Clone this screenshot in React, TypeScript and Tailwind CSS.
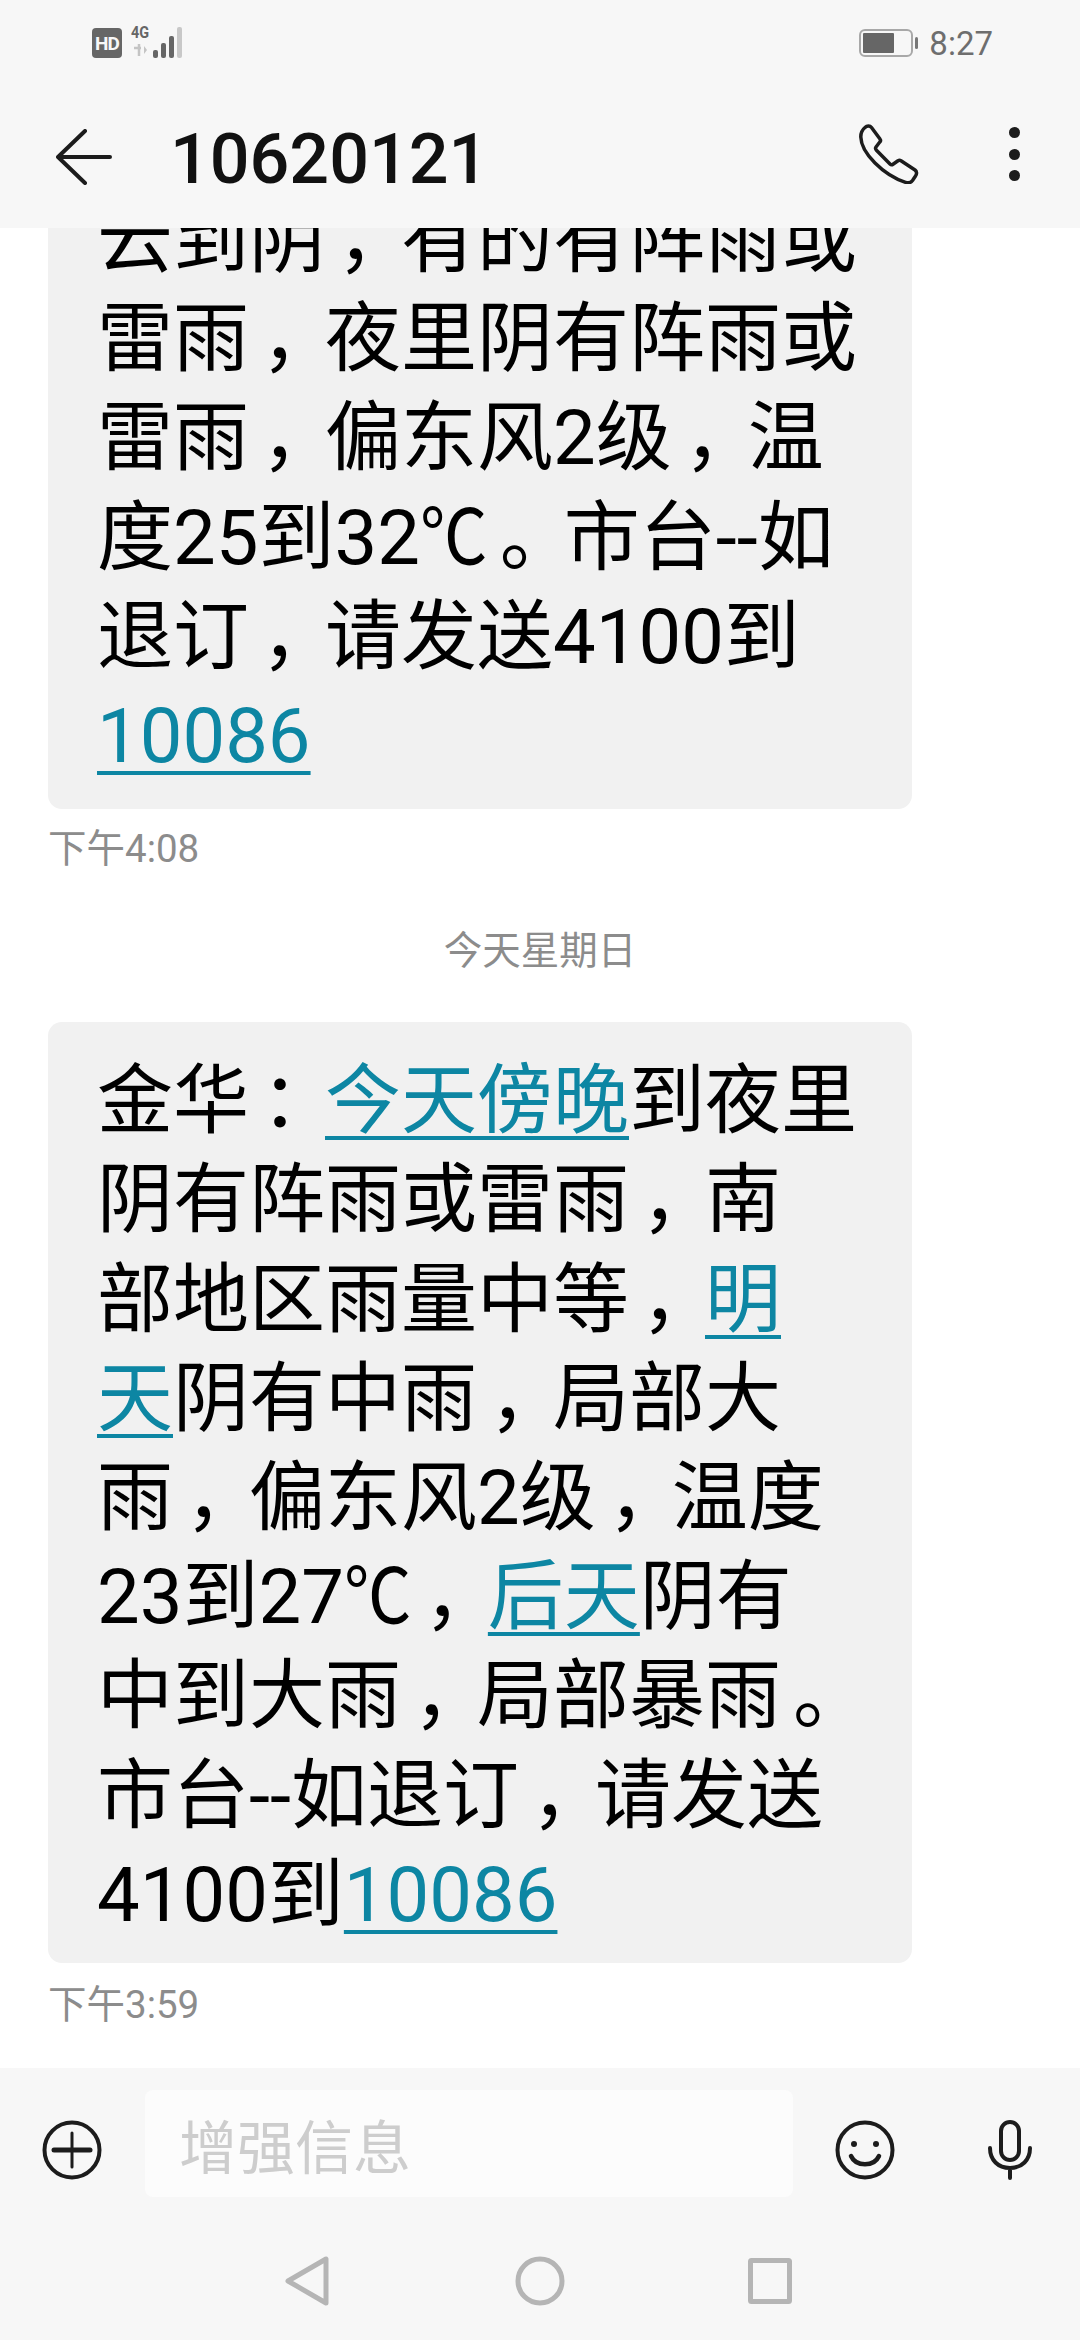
const font = "[font-family:Roboto,'Noto_Sans_CJK_SC',sans-serif]";

type Segment = string | { link: string };

const oldMessage: Segment[][] = [
  ["云到阴，有的有阵雨或"],
  ["雷雨，夜里阴有阵雨或"],
  ["雷雨，偏东风2级，温"],
  ["度25到32℃。市台--如"],
  ["退订，请发送4100到"],
  [{ link: "10086" }],
];

const newMessage: Segment[][] = [
  ["金华：", { link: "今天傍晚" }, "到夜里"],
  ["阴有阵雨或雷雨，南"],
  ["部地区雨量中等，", { link: "明" }],
  [{ link: "天" }, "阴有中雨，局部大"],
  ["雨，偏东风2级，温度"],
  ["23到27℃，", { link: "后天" }, "阴有"],
  ["中到大雨，局部暴雨。"],
  ["市台--如退订，请发送"],
  ["4100到", { link: "10086" }],
];

// punctuation sits nearer the middle of its cell in the original, and the degree sign is narrower
function Run({ text }: { text: string }) {
  return (
    <>
      {text.split(/([，。：℃])/).map((part, i) => {
        if (part === "℃") {
          return (
            <span key={i} className="mr-[-8px] inline-block origin-left scale-x-[0.89]">
              {part}
            </span>
          );
        }
        if (part === "，" || part === "。" || part === "：") {
          return (
            <span key={i} className="ml-[12px] tracking-[-12px]">
              {part}
            </span>
          );
        }
        return <span key={i}>{part}</span>;
      })}
    </>
  );
}

function Bubble({ lines, className }: { lines: Segment[][]; className: string }) {
  return (
    <div className={`w-[864px] rounded-[14px] bg-[#f1f1f1] pl-[49px] text-[76px] leading-[99.2px] text-black whitespace-nowrap ${className}`}>
      {lines.map((line, i) => (
        <div key={i}>
          {line.map((seg, j) =>
            typeof seg === "string" ? (
              <Run key={j} text={seg} />
            ) : (
              <span key={j} className="text-[#0d86a3] underline decoration-[4px] underline-offset-[9px]">
                {seg.link}
              </span>
            )
          )}
        </div>
      ))}
    </div>
  );
}

function SignalBars() {
  return (
    <svg width="62" height="32" viewBox="0 0 62 32" className="ml-[8px]">
      <path d="M4 21h7M9 17v12" stroke="#c4c4c4" strokeWidth="2.5" fill="none" />
      <path d="M14 19l3 4-3 4" fill="#c4c4c4" />
      <rect x="23" y="23" width="5" height="8" rx="2" fill="#666" />
      <rect x="31" y="16" width="5" height="15" rx="2" fill="#666" />
      <rect x="39" y="9" width="5" height="22" rx="2" fill="#666" />
      <rect x="47" y="0" width="5" height="31" rx="2" fill="#c8c8c8" />
    </svg>
  );
}

export default function App() {
  return (
    <div className={`relative flex h-[2340px] w-[1080px] flex-col overflow-hidden bg-white ${font}`}>
      <header className="z-10 h-[228px] shrink-0 bg-[#f7f7f7]">
        <div className="flex h-[86px] items-center justify-between pl-[92px] pr-[87px]">
          <div className="relative flex items-center">
            <div className="flex h-[30px] w-[30px] items-center justify-center rounded-[4px] bg-[#666] text-[19px] font-bold leading-none tracking-[-1px] text-[#f7f7f7]">
              HD
            </div>
            <SignalBars />
            <span className="absolute left-[39px] top-[-3px] origin-left scale-x-[0.85] text-[17px] font-bold leading-none text-[#666]">4G</span>
          </div>
          <div className="flex items-center">
            <svg width="60" height="28" viewBox="0 0 60 28">
              <rect x="1" y="1" width="52" height="26" rx="5" fill="none" stroke="#a8a8a8" strokeWidth="2" />
              <rect x="4" y="4" width="31" height="20" rx="1" fill="#666" />
              <rect x="56" y="8" width="3" height="12" rx="1.5" fill="#777" />
            </svg>
            <span className="ml-[10px] text-[33px] leading-none text-[#6e6e6e]">8:27</span>
          </div>
        </div>
        <div className="flex h-[142px] items-center pl-[56px] pr-[60px]">
          <svg width="56" height="56" viewBox="0 0 56 56" fill="none" stroke="#1c1c1c" strokeWidth="4" strokeLinecap="round" strokeLinejoin="round">
            <path d="M29 2L2 28l27 26M2 28h52" />
          </svg>
          <h1 className="ml-[58px] mt-[4px] flex-1 text-[70px] font-medium leading-none text-[#111]">10620121</h1>
          <svg width="60" height="60" viewBox="0 0 60 60" fill="none" stroke="#1c1c1c" strokeWidth="3.5" strokeLinejoin="round" className="mb-[6px]">
            <path d="M6 3.500C8 1.500 11 1.500 12.500 3.500L21 15c.8 1 .7 2-.2 3l-3.800 5c-.7 1-.6 2 .2 3L31 40c1 1 2 1 3 .3l5-3.500c1-.6 2-.6 3 0L56 46c2 1.500 2 4 .5 6l-3 4.500c-1.500 2-4 2.800-7 1.800C36 55 26 49 16 39 7 30 2 21 1.800 13 1.700 9 3 6 6 3.500z" />
          </svg>
          <div className="mb-[6px] ml-[90px] flex h-[54px] flex-col items-center justify-between">
            <span className="h-[11px] w-[11px] rounded-full bg-[#1c1c1c]" />
            <span className="h-[11px] w-[11px] rounded-full bg-[#1c1c1c]" />
            <span className="h-[11px] w-[11px] rounded-full bg-[#1c1c1c]" />
          </div>
        </div>
      </header>

      <main className="flex min-h-0 flex-1 flex-col justify-end overflow-hidden pb-[39px] pl-[48px]">
        <Bubble lines={oldMessage} className="pb-[23px] pt-[3px]" />
        <div className="mt-[16px] text-[38.500px] leading-[48px] text-[#8c8c8c]">下午4:08</div>
        <div className="mb-[47px] ml-[-48px] mt-[54px] text-center text-[38.500px] leading-[48px] text-[#8c8c8c]">今天星期日</div>
        <Bubble lines={newMessage} className="pb-[18px] pt-[30px]" />
        <div className="mt-[18px] text-[38.500px] leading-[48px] text-[#8c8c8c]">下午3:59</div>
      </main>

      <footer className="h-[272px] shrink-0 bg-[#f7f7f7]">
        <div className="flex h-[150px] items-start pl-[42px] pt-[22px]">
          <svg width="60" height="60" viewBox="0 0 60 60" fill="none" stroke="#1c1c1c" strokeWidth="4" strokeLinecap="round" className="mt-[30px]">
            <circle cx="30" cy="30" r="27.500" />
            <path d="M12 30h36" strokeWidth="5" />
            <path d="M30 13v34" strokeWidth="3" />
          </svg>
          <div className="ml-[43px] flex h-[107px] w-[648px] items-center rounded-[8px] bg-[#fcfcfc] pl-[34px] pt-[10px] text-[58px] leading-none text-[#cdcdcd]">
            增强信息
          </div>
          <svg width="60" height="60" viewBox="0 0 60 60" fill="none" stroke="#1c1c1c" strokeWidth="4" strokeLinecap="round" className="ml-[42px] mt-[30px]">
            <circle cx="30" cy="30" r="27.500" />
            <path d="M16 36c5 11 23 11 28 0" strokeWidth="4.500" />
            <circle cx="19" cy="24" r="3" fill="#1c1c1c" stroke="none" />
            <circle cx="41" cy="24" r="3" fill="#1c1c1c" stroke="none" />
          </svg>
          <svg width="44" height="60" viewBox="0 0 44 60" fill="none" stroke="#1c1c1c" strokeWidth="4" strokeLinecap="round" className="ml-[93px] mt-[30px]">
            <rect x="13" y="2" width="18" height="38" rx="9" />
            <path d="M2 28c0 12 8 20 20 20s20-8 20-20M22 48v10" />
          </svg>
        </div>
        <div className="flex h-[122px] items-start justify-center gap-[186px] pt-[38px]">
          <svg width="44" height="50" viewBox="0 0 44 50" fill="none" stroke="#b5b5b5" strokeWidth="5" strokeLinejoin="round" className="ml-[-4px]">
            <path d="M41 3v44L3 25z" />
          </svg>
          <svg width="50" height="50" viewBox="0 0 50 50" fill="none" stroke="#b5b5b5" strokeWidth="5">
            <circle cx="25" cy="25" r="22" />
          </svg>
          <svg width="44" height="46" viewBox="0 0 44 46" fill="none" stroke="#b5b5b5" strokeWidth="5" strokeLinejoin="round" className="ml-[-3px] mt-[2px]">
            <rect x="2.500" y="2.500" width="39" height="41" rx="1" />
          </svg>
        </div>
      </footer>
    </div>
  );
}
